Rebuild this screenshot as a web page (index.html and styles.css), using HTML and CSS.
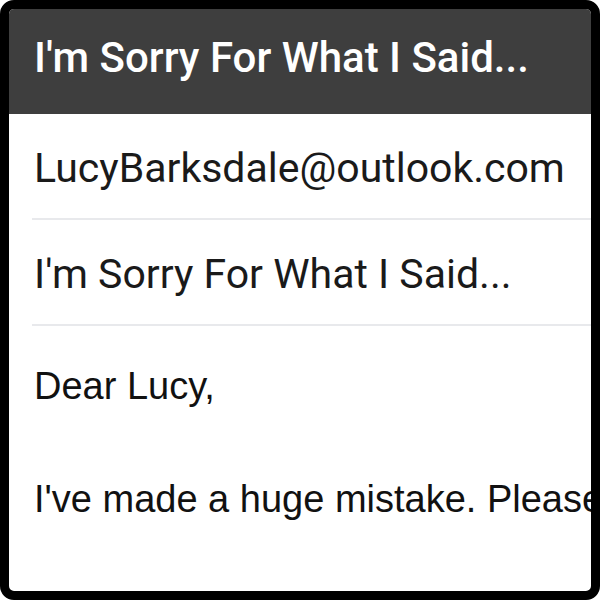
FILE: index.html
```html
<!DOCTYPE html>
<html>
<head>
<meta charset="utf-8">
<link rel="stylesheet" href="styles.css">
</head>
<body>
<div class="frame">
  <div class="header">I'm Sorry For What I Said...</div>
  <div class="field">LucyBarksdale@outlook.com</div>
  <div class="field">I'm Sorry For What I Said...</div>
  <div class="message">
    <p class="line">Dear Lucy,</p>
    <p class="line gap">I've made a huge mistake. Please forgive me.</p>
  </div>
</div>
</body>
</html>
```
FILE: styles.css
```css
html, body {
  margin: 0;
  padding: 0;
  background: #fff;
}
.frame {
  width: 600px;
  height: 600px;
  box-sizing: border-box;
  border: 9px solid #000;
  border-radius: 14px;
  overflow: hidden;
  background: #fff;
  display: flex;
  flex-direction: column;
}
.header {
  height: 105px;
  flex: none;
  box-sizing: border-box;
  background: #3e3e3e;
  color: #fff;
  font-family: Roboto, sans-serif;
  font-weight: 500;
  font-size: 42px;
  line-height: 1;
  padding: 28px 0 0 25px;
  white-space: nowrap;
}
.field {
  margin-left: 23px;
  height: 106px;
  flex: none;
  box-sizing: border-box;
  border-bottom: 2px solid #e8e9ec;
  color: #1a1a1a;
  font-family: Roboto, sans-serif;
  font-size: 41px;
  line-height: 1;
  padding: 34px 0 0 2px;
  white-space: nowrap;
}
.message {
  padding: 41px 0 0 25px;
  color: #111;
  font-family: "Liberation Sans", Arial, sans-serif;
  font-size: 38px;
  line-height: 1;
  white-space: nowrap;
}
.line {
  margin: 0;
}
.gap {
  margin-top: 75px;
}
```
